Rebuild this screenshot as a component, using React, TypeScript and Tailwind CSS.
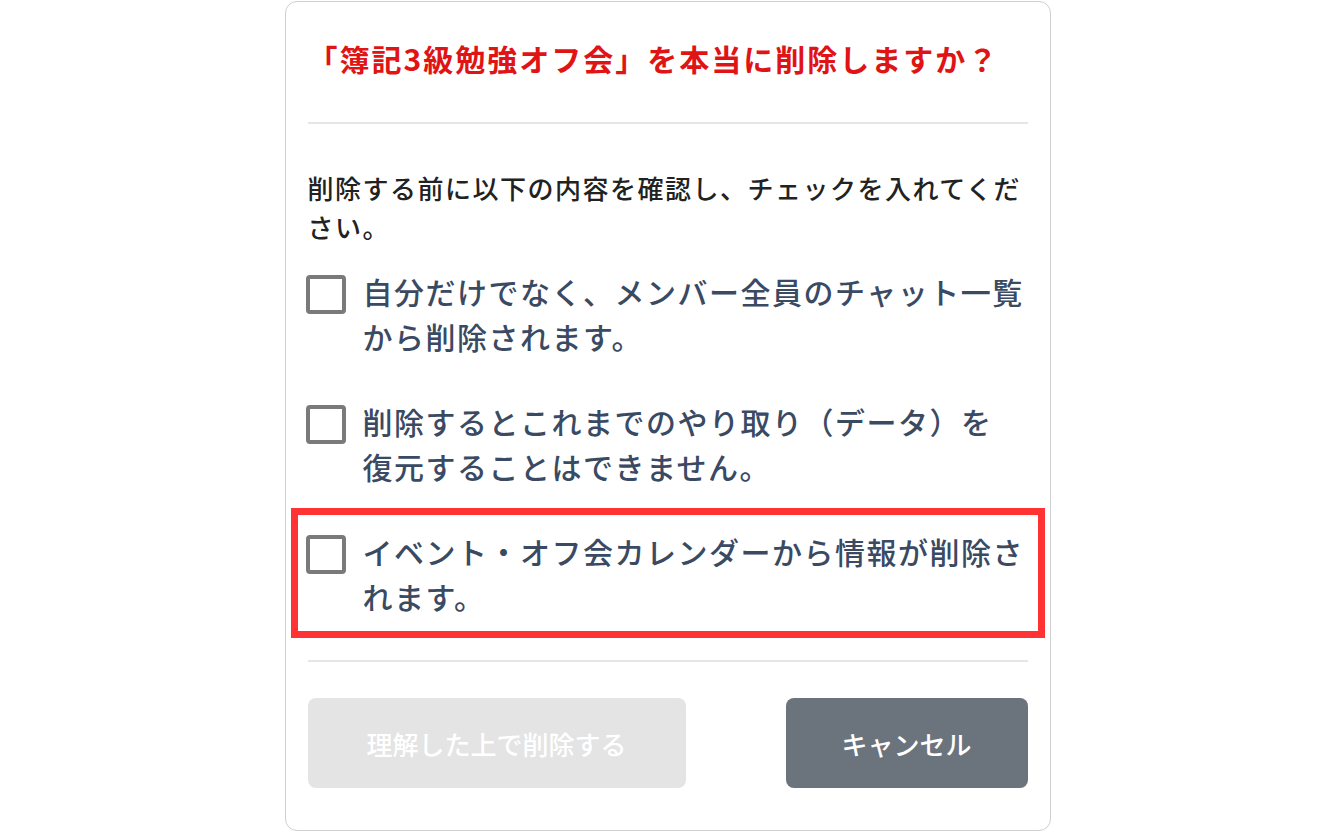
import React, { useState } from "react";

const items = [
  { id: 1, text: "自分だけでなく、メンバー全員のチャット一覧から削除されます。" },
  { id: 2, text: "削除するとこれまでのやり取り（データ）を", rest: "復元することはできません。" },
  { id: 3, text: "イベント・オフ会カレンダーから情報が削除されます。", highlight: true },
];

function CheckItem({
  text,
  rest,
  highlight,
  checked,
  onToggle,
}: {
  text: string;
  rest?: string;
  highlight?: boolean;
  checked: boolean;
  onToggle: () => void;
}) {
  return (
    <div className="relative">
      {/* red annotation frame */}
      {highlight && (
        <div className="pointer-events-none absolute -left-[17px] -right-[17px] -top-[21px] -bottom-[19px] border-[7px] border-[#ff3333]" />
      )}
      <label className="flex cursor-pointer items-start">
        <span
          onClick={onToggle}
          className={`-ml-[2px] mt-[6px] h-[39px] w-[40px] shrink-0 rounded-[4px] border-[4px] border-[#7a7a7a] ${
            checked ? "bg-[#7a7a7a]" : "bg-white"
          }`}
        />
        <span className="ml-[17px] text-[30px] font-medium leading-[45px] tracking-[1.5px] text-[#3a4a63]">
          {text}
          {rest && (
            <>
              <br />
              {rest}
            </>
          )}
        </span>
      </label>
    </div>
  );
}

export default function App() {
  const [checked, setChecked] = useState<number[]>([]);

  const toggle = (id: number) => {
    setChecked((prev) => (prev.includes(id) ? prev.filter((x) => x !== id) : [...prev, id]));
  };

  const allChecked = checked.length === items.length;

  return (
    <div
      className="flex h-[833px] w-full justify-center bg-white pt-[1px]"
      style={{ fontFamily: '"Noto Sans CJK JP", "Noto Sans", sans-serif' }}
    >
      <div className="h-[830px] w-[766px] rounded-[12px] border border-[#cfcfcf] bg-white px-[22px] pt-[34px]">
        {/* Title */}
        <h2 className="text-[30px] font-bold leading-[45px] tracking-[2px] text-[#e01414]">
          「簿記3級勉強オフ会」を本当に削除しますか？
        </h2>

        <div className="mt-[41px] h-[2px] bg-[#e6e6e6]" />

        <p className="mt-[44px] text-[26px] font-medium leading-[39px] tracking-[1.5px] text-[#222]">
          削除する前に以下の内容を確認し、チェックを入れてください。
        </p>

        <div className="mt-[23px] flex flex-col gap-[40px]">
          {items.map((it) => (
            <CheckItem
              key={it.id}
              text={it.text}
              rest={it.rest}
              highlight={it.highlight}
              checked={checked.includes(it.id)}
              onToggle={() => toggle(it.id)}
            />
          ))}
        </div>

        <div className="mt-[41px] h-[2px] bg-[#e6e6e6]" />

        {/* Buttons */}
        <div className="mt-[36px] flex justify-between">
          <button
            disabled={!allChecked}
            className={`h-[90px] w-[378px] rounded-[8px] text-[26px] font-medium text-white ${
              allChecked ? "bg-[#e01414]" : "bg-[#e4e4e4]"
            }`}
          >
            理解した上で削除する
          </button>
          <button className="h-[90px] w-[242px] rounded-[8px] bg-[#6b737c] text-[26px] font-medium text-white">
            キャンセル
          </button>
        </div>
      </div>
    </div>
  );
}
